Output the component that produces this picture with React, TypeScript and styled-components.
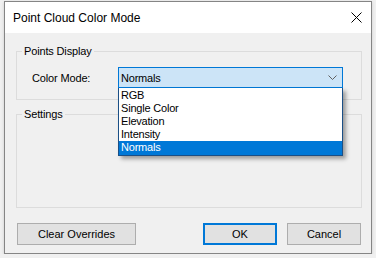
import React from "react";
import styled, { createGlobalStyle } from "styled-components";

const GlobalStyle = createGlobalStyle`
  body {
    margin: 0;
    background: #f0f0f0;
    font-family: "Liberation Sans", Arial, sans-serif;
  }
`;

const Window = styled.div`
  box-sizing: border-box;
  width: 368px;
  height: 253px;
  margin: 1px 0 0 4px;
  border: 1px solid #858585;
  background: #f0f0f0;
  display: flex;
  flex-direction: column;
  box-shadow: 0 1px 3px rgba(0, 0, 0, 0.15);
`;

const TitleBar = styled.div`
  height: 31px;
  background: #ffffff;
  display: flex;
  align-items: center;
  justify-content: space-between;
  padding: 0 9px 0 8px;
`;

const Title = styled.div`
  font-size: 12px;
  color: #000;
`;

const Body = styled.div`
  padding: 12px 9px 0 11px;
  display: flex;
  flex-direction: column;
`;

const Group = styled.fieldset<{ $height?: number }>`
  box-sizing: border-box;
  margin: ${({ $height }) => ($height ? "8px" : "0")} 0 0 0;
  padding: 0 15px 11px 15px;
  border: 1px solid #dcdcdc;
  min-width: 0;
  height: ${({ $height }) => ($height ? `${$height}px` : "auto")};
`;

const Legend = styled.legend`
  font-size: 11px;
  line-height: 13px;
  padding: 0 2px;
  margin-left: -10px;
  color: #000;
  letter-spacing: -0.15px;
`;

const Row = styled.div`
  display: flex;
  align-items: center;
  margin-top: 9px;
`;

const Label = styled.div`
  width: 86px;
  font-size: 11px;
  color: #000;
  letter-spacing: -0.15px;
`;

const Combo = styled.div`
  position: relative;
  box-sizing: border-box;
  width: 225px;
  height: 21px;
  border: 1px solid #0078d7;
  background: #cce4f7;
  display: flex;
  align-items: center;
  justify-content: space-between;
  padding: 0 5px 0 2px;
  font-size: 11px;
  color: #000;
  letter-spacing: -0.2px;
`;

const List = styled.div`
  position: absolute;
  top: 20px;
  left: -1px;
  box-sizing: border-box;
  width: 225px;
  border: 1px solid #1b4f86;
  border-top: none;
  background: #fff;
  box-shadow: 3px 3px 4px rgba(0, 0, 0, 0.35);
  z-index: 2;
`;

const Item = styled.div<{ $selected?: boolean }>`
  height: 13px;
  line-height: 13px;
  padding-left: 2px;
  font-size: 11px;
  letter-spacing: -0.2px;
  color: ${({ $selected }) => ($selected ? "#fff" : "#000")};
  background: ${({ $selected }) => ($selected ? "#0078d7" : "transparent")};
  &:first-child {
    margin-top: 1px;
  }
  &:last-child {
    height: 14px;
  }
`;

const Buttons = styled.div`
  display: flex;
  margin-top: 15px;
  padding-left: 1px;
`;

const Button = styled.button<{ $width: number; $primary?: boolean; $gap?: number }>`
  box-sizing: border-box;
  width: ${({ $width }) => $width}px;
  height: 22px;
  margin-left: ${({ $gap }) => $gap ?? 0}px;
  background: #e1e1e1;
  border: ${({ $primary }) => ($primary ? "2px solid #0078d7" : "1px solid #adadad")};
  font-family: "Liberation Sans", Arial, sans-serif;
  font-size: 11px;
  color: #000;
  padding: 0;
`;

const options = ["RGB", "Single Color", "Elevation", "Intensity", "Normals"];

export default function App() {
  return (
    <>
      <GlobalStyle />
      <Window>
        <TitleBar>
          <Title>Point Cloud Color Mode</Title>
          <svg width="11" height="11" viewBox="0 0 11 11">
            <path d="M0.5 0.5 L10.5 10.5 M10.5 0.5 L0.5 10.5" stroke="#000" strokeWidth="1" />
          </svg>
        </TitleBar>
        <Body>
          <Group>
            <Legend>Points Display</Legend>
            <Row>
              <Label>Color Mode:</Label>
              <Combo>
                <span>Normals</span>
                <svg width="9" height="5" viewBox="0 0 9 5">
                  <path d="M0.5 0.5 L4.5 4.5 L8.5 0.5" stroke="#606060" strokeWidth="1" fill="none" />
                </svg>
                <List>
                  {options.map((o) => (
                    <Item key={o} $selected={o === "Normals"}>
                      {o}
                    </Item>
                  ))}
                </List>
              </Combo>
            </Row>
          </Group>
          <Group $height={100}>
            <Legend>Settings</Legend>
          </Group>
          <Buttons>
            <Button $width={119}>Clear Overrides</Button>
            <Button $width={74} $gap={67} $primary>
              OK
            </Button>
            <Button $width={74} $gap={10}>
              Cancel
            </Button>
          </Buttons>
        </Body>
      </Window>
    </>
  );
}
